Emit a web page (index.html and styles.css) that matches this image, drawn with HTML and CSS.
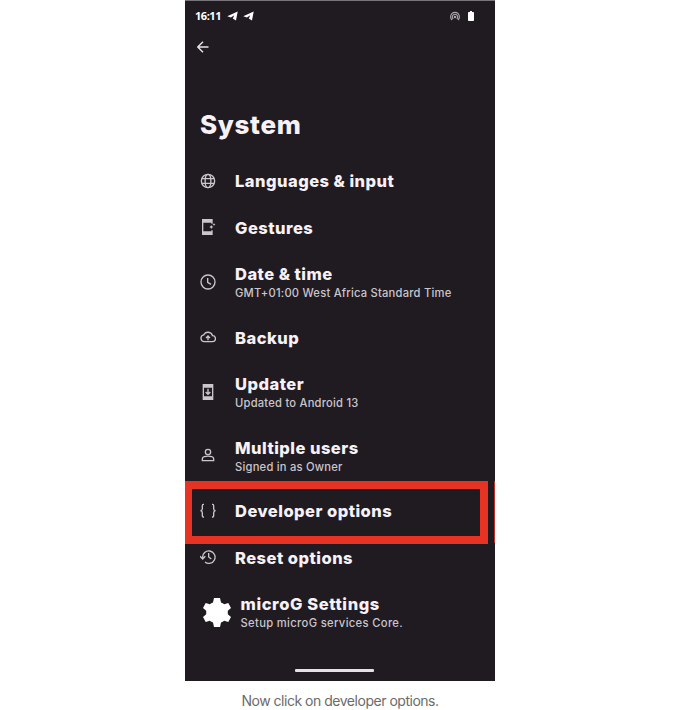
FILE: index.html
```html
<!DOCTYPE html>
<html lang="en">
<head>
<meta charset="utf-8">
<title>System settings</title>
<link rel="stylesheet" href="styles.css">
</head>
<body>
<figure class="figure">
  <div class="phone">
    <header class="status">
      <span class="clock">16:11</span>
      <svg class="plane" viewBox="0 0 11 10"><path d="M.3 5.200 10.700.5 9 9.600 5.800 7.400 7.300 4.300 3.900 6.500Z"/></svg>
      <svg class="plane" viewBox="0 0 11 10"><path d="M.3 5.200 10.700.5 9 9.600 5.800 7.400 7.300 4.300 3.900 6.500Z"/></svg>
      <svg class="hotspot" viewBox="0 0 10 10"><path d="M2 9A4.400 4.400 0 1 1 8 9M3.200 8A2.700 2.700 0 1 1 6.800 8"/><circle cx="5" cy="6" r=".7"/></svg>
      <svg class="battery" viewBox="0 0 6 10"><path d="M2 0h2v1h1.200q.8 0 .8.8v7.400q0 .8-.8.8H.8Q0 10 0 9.200V1.800Q0 1 .8 1H2Z"/></svg>
    </header>
    <svg class="back" viewBox="0 0 12 12"><path d="M11.500 6H1M6 .8.8 6 6 11.200"/></svg>
    <h1 class="heading">System</h1>
    <ul class="list">
      <li class="row">
        <svg class="icon" viewBox="0 0 24 24"><circle cx="12" cy="12" r="10"/><ellipse cx="12" cy="12" rx="4.300" ry="10"/><path d="M3 8.500h18M3 15.500h18"/></svg>
        <div class="title">Languages &amp; input</div>
      </li>
      <li class="row">
        <svg class="icon" viewBox="0 0 24 24"><path d="M18 7V1H4v22h14v-6M4 4.500h14M4 19.500h14M4 3h14M4 21h14"/><path class="solid" d="m17 9 1 2 2 1-2 1-1 2-1-2-2-1 2-1ZM21 6l.7 1.500 1.500.7-1.500.7L21 10.500l-.7-1.600-1.500-.7 1.500-.7Z"/></svg>
        <div class="title">Gestures</div>
      </li>
      <li class="row double">
        <svg class="icon" viewBox="0 0 24 24"><circle cx="12" cy="12" r="10.500"/><path d="M11.500 6v6.500l5 3"/></svg>
        <div><div class="title">Date &amp; time</div><div class="sub">GMT+01:00 West Africa Standard Time</div></div>
      </li>
      <li class="row">
        <svg class="icon" viewBox="0 0 24 24"><path d="M6.500 19a5.200 5.200 0 0 1-.8-10.300A7 7 0 0 1 18.700 10a4.500 4.500 0 0 1 0 9ZM12 17v-6M9 13.500l3-3 3 3"/></svg>
        <div class="title">Backup</div>
      </li>
      <li class="row double">
        <svg class="icon" viewBox="0 0 24 24"><path d="M5 1h14v22H5ZM5 4.500h14M5 19.500h14M5 3h14M5 21h14M12 7v8M8.500 12l3.500 3.500 3.500-3.500"/></svg>
        <div><div class="title">Updater</div><div class="sub">Updated to Android 13</div></div>
      </li>
      <li class="row double">
        <svg class="icon" viewBox="0 0 24 24"><circle cx="12" cy="7.500" r="4"/><path d="M3.500 20.500v-3q0-2 3-3 5.500-1.600 11 0 3 1 3 3v3Z"/></svg>
        <div><div class="title">Multiple users</div><div class="sub">Signed in as Owner</div></div>
      </li>
      <li class="row marked">
        <svg class="icon" viewBox="0 0 24 24"><path d="M6 2H5Q3.500 2 3.500 4v4.500Q3.500 11 .8 11.500 3.500 12 3.500 14.500V19q0 2 1.500 2h1M18 2h1q1.500 0 1.500 2v4.500q0 2.500 2.700 3-2.700.5-2.700 3V19q0 2-1.500 2h-1"/></svg>
        <div class="title">Developer options</div>
      </li>
      <li class="row">
        <svg class="icon" viewBox="0 0 24 24"><path d="M4 13a9.300 9.300 0 1 1 3.500 6.500M0 11l4 4 4-4M13 6v6l4 3"/></svg>
        <div class="title">Reset options</div>
      </li>
      <li class="row double microg">
        <svg class="gear" viewBox="0 0 28 29"><path d="M11 0h6l1 4.500q1.800.6 3.200 1.800L25.300 5 28 10l-3.200 2.800v3.400L28 19l-2.700 5-4.100-1.300Q19.800 23.900 18 24.500L17 29h-6l-1-4.500q-1.800-.6-3.200-1.800L2.700 24 0 19l3.200-2.800v-3.400L0 10l2.700-5 4.100 1.300Q8.200 5.100 10 4.500Z"/></svg>
        <div><div class="title settings">microG Settings</div><div class="sub core">Setup microG services Core.</div></div>
      </li>
    </ul>
    <div class="handle"></div>
  </div>
  <figcaption class="caption">Now click on developer options.</figcaption>
</figure>
</body>
</html>
```
FILE: styles.css
```css
* { box-sizing: border-box; }
body { margin: 0; background: #fff; font-family: Inter, sans-serif; }
.figure { margin: 0; width: 680px; height: 710px; overflow: hidden; }
.phone { width: 310px; height: 680.5px; margin: 0 auto; background: #201b21; border-top: 1px solid #77757a; display: flex; flex-direction: column; }
.status { height: 29px; display: flex; align-items: center; padding: 0 21px 0 11px; color: #fff; }
.clock { width: 25px; margin-right: 7px; margin-left: -1px; font: 700 11px/14px "Open Sans", sans-serif; letter-spacing: -.45px; white-space: nowrap; }
.plane { width: 11px; height: 10px; margin-right: 5px; fill: #fff; }
.hotspot { width: 10px; height: 10px; margin-left: auto; margin-right: 8px; fill: #aaa6ab; stroke: #aaa6ab; stroke-width: 1.1; }
.hotspot path { fill: none; }
.battery { width: 6px; height: 10px; fill: #fff; }
.back { width: 12px; height: 12px; margin: 11px 0 0 12px; fill: none; stroke: #e8e3e9; stroke-width: 1.4; flex: none; }
.heading { margin: 54px 0 0 15px; height: 36px; font-size: 26px; line-height: 36px; font-weight: 800; color: #f7f1f8; letter-spacing: .65px; }
.list { list-style: none; margin: 14.5px 0 0; padding: 0; }
.row { display: flex; align-items: center; height: 46.5px; padding: 1px 0 0 15px; position: relative; white-space: nowrap; }
.double { height: 63.5px; padding-top: 0; padding-bottom: .5px; }
.icon { width: 16px; height: 16px; margin: -1px 19px 0 0; fill: none; stroke: #cbc5cc; stroke-width: 2; flex: none; }
.solid { fill: #cbc5cc; stroke: none; }
.title { color: #f7f1f8; font-weight: 800; font-size: 16.5px; line-height: 22px; letter-spacing: .48px; }
.sub { color: #cbc5cc; font: 500 11.2px/16px Inter, sans-serif; letter-spacing: .22px; }
.marked::before { content: ""; box-sizing: border-box; position: absolute; left: 0; top: -7px; width: 303px; height: 63px; border: 8px solid #e63323; border-left-width: 7px; }
.marked::after { content: ""; position: absolute; right: 0; top: -7px; width: 1px; height: 62px; background: #c42c26; }
.microg { padding-left: 18px; }
.gear { width: 28px; height: 29px; margin-right: 9.5px; fill: #fff; }
.settings { letter-spacing: .6px; }
.core { letter-spacing: .35px; }
.handle { width: 79px; height: 3px; margin: 24.5px auto 0 110px; border-radius: 1px; background: #e6dfe8; }
.caption { height: 29px; padding-top: 9.5px; text-align: center; font: 14px/21px Inter, sans-serif; letter-spacing: -.48px; color: #6b6b6b; }
```
